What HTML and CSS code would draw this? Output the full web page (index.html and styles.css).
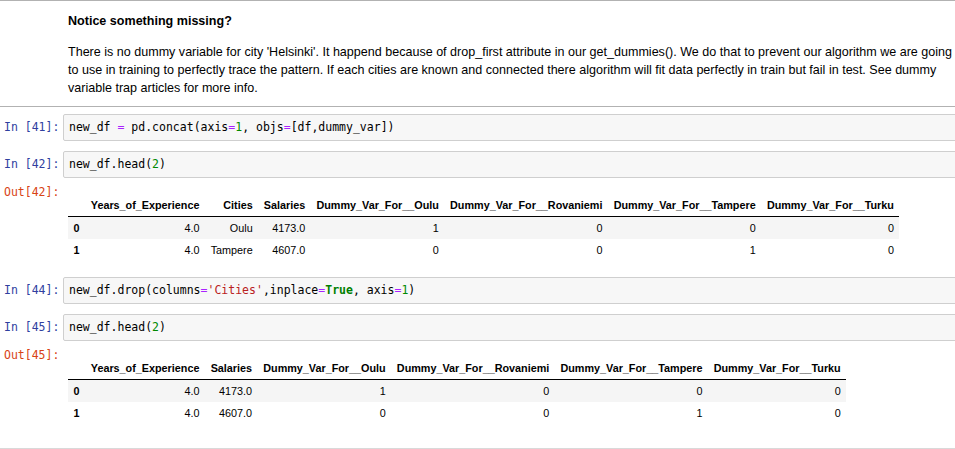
FILE: index.html
```html
<!DOCTYPE html>
<html>
<head>
<meta charset="utf-8">
<link rel="stylesheet" href="styles.css">
</head>
<body>
<div class="notebook">
  <div class="rule rule-dark"></div>
  <div class="cell md">
    <div class="prompt"></div>
    <div class="md-body">
      <h4>Notice something missing?</h4>
      <p>There is no dummy variable for city 'Helsinki'. It happend because of drop_first attribute in our get_dummies(). We do that to prevent our algorithm we are going to use in training to perfectly trace the pattern. If each cities are known and connected there algorithm will fit data perfectly in train but fail in test. See dummy variable trap articles for more info.</p>
    </div>
  </div>
  <div class="rule rule-dark rule-after-md"></div>

  <div class="cell code first">
    <div class="prompt in">In&nbsp;[41]:</div>
    <div class="input">new_df <span class="op">=</span> pd.concat(axis<span class="op">=</span><span class="num">1</span>, objs<span class="op">=</span>[df,dummy_var])</div>
  </div>
  <div class="cell code">
    <div class="prompt in">In&nbsp;[42]:</div>
    <div class="input">new_df.head(<span class="num">2</span>)</div>
  </div>
  <div class="cell output">
    <div class="prompt out">Out[42]:</div>
    <div class="out-body">
      <table class="df">
        <thead>
          <tr><th></th><th>Years_of_Experience</th><th>Cities</th><th>Salaries</th><th>Dummy_Var_For__Oulu</th><th>Dummy_Var_For__Rovaniemi</th><th>Dummy_Var_For__Tampere</th><th>Dummy_Var_For__Turku</th></tr>
        </thead>
        <tbody>
          <tr><th>0</th><td>4.0</td><td>Oulu</td><td>4173.0</td><td>1</td><td>0</td><td>0</td><td>0</td></tr>
          <tr><th>1</th><td>4.0</td><td>Tampere</td><td>4607.0</td><td>0</td><td>0</td><td>1</td><td>0</td></tr>
        </tbody>
      </table>
    </div>
  </div>

  <div class="cell code gap-big">
    <div class="prompt in">In&nbsp;[44]:</div>
    <div class="input">new_df.drop(columns<span class="op">=</span><span class="str">'Cities'</span>,inplace<span class="op">=</span><span class="kw">True</span>, axis<span class="op">=</span><span class="num">1</span>)</div>
  </div>
  <div class="cell code">
    <div class="prompt in">In&nbsp;[45]:</div>
    <div class="input">new_df.head(<span class="num">2</span>)</div>
  </div>
  <div class="cell output">
    <div class="prompt out">Out[45]:</div>
    <div class="out-body">
      <table class="df">
        <thead>
          <tr><th></th><th>Years_of_Experience</th><th>Salaries</th><th>Dummy_Var_For__Oulu</th><th>Dummy_Var_For__Rovaniemi</th><th>Dummy_Var_For__Tampere</th><th>Dummy_Var_For__Turku</th></tr>
        </thead>
        <tbody>
          <tr><th>0</th><td>4.0</td><td>4173.0</td><td>1</td><td>0</td><td>0</td><td>0</td></tr>
          <tr><th>1</th><td>4.0</td><td>4607.0</td><td>0</td><td>0</td><td>1</td><td>0</td></tr>
        </tbody>
      </table>
    </div>
  </div>
  <div class="rule rule-light rule-end"></div>
</div>
</body>
</html>
```

FILE: styles.css
```css
html, body {
  margin: 0;
  padding: 0;
  overflow: hidden;
  background: #fff;
}

.notebook {
  width: 1010px;
  font-family: "Liberation Sans", Arial, sans-serif;
  color: #000;
}

.rule {
  height: 1px;
}
.rule-dark { background: #b2b2b2; }
.rule-light { background: #d9d9d9; }
.rule-after-md { margin-top: 9px; }
.rule-end { margin-top: 24px; }

.cell {
  display: grid;
  grid-template-columns: 63px 1fr;
}

.prompt {
  font-family: "DejaVu Sans Mono", "Liberation Mono", monospace;
  font-size: 11.5px;
  line-height: 17px;
  padding-left: 4px;
  white-space: nowrap;
}
.prompt.in { color: #303f9f; padding-top: 5px; }
.prompt.out { color: #d84315; padding-top: 6px; }

.md-body {
  padding-left: 5px;
  width: 895px;
  font-size: 12.55px;
  line-height: 18px;
}
.md-body h4 {
  margin: 11px 0 0;
  font-size: 12.55px;
  font-weight: bold;
  line-height: 18px;
}
.md-body p {
  margin: 13px 0 0;
}

.code { margin-top: 10px; }
.code.first { margin-top: 7px; }
.code.gap-big { margin-top: 16px; }

.input {
  background: #f7f7f7;
  border: 1px solid #cfcfcf;
  border-radius: 2px;
  padding: 4px 5px;
  font-family: "DejaVu Sans Mono", "Liberation Mono", monospace;
  font-size: 11.5px;
  line-height: 17px;
  white-space: pre;
}
.op { color: #aa22ff; }
.num { color: #008800; }
.str { color: #ba2121; }
.kw { color: #008000; font-weight: bold; }

.out-body {
  padding-left: 5px;
  padding-top: 16px;
}

.df {
  border-collapse: collapse;
  border-spacing: 0;
  font-size: 10.8px;
  color: #000;
}
.df th, .df td {
  padding: 4px 5.6px;
  line-height: 14px;
  text-align: right;
  vertical-align: middle;
  white-space: nowrap;
}
.df th { font-weight: bold; }
.df thead th { border-bottom: 1px solid #000; }
.df tbody th { text-align: left; }
.df tbody tr:nth-child(odd) { background: #f5f5f5; }
```
